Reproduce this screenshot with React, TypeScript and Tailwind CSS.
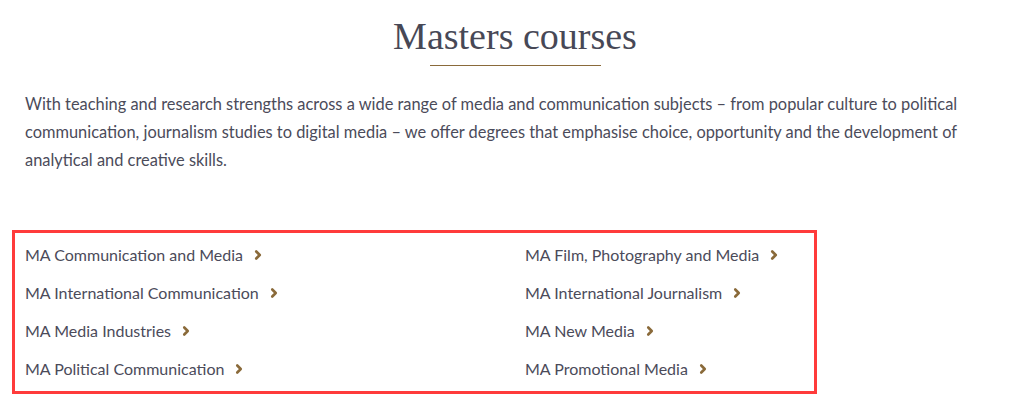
import { ChevronRight } from "lucide-react";

const left = [
  "MA Communication and Media",
  "MA International Communication",
  "MA Media Industries",
  "MA Political Communication",
];

const right = [
  "MA Film, Photography and Media",
  "MA International Journalism",
  "MA New Media",
  "MA Promotional Media",
];

function CourseLink({ label }: { label: string }) {
  return (
    <a href="#" className="flex h-[38px] items-center gap-[8px] text-[16px] text-[#4b4b5a]">
      {label}
      <ChevronRight size={14} strokeWidth={4.5} className="text-[#8a6a3a]" />
    </a>
  );
}

export default function App() {
  return (
    <div className="min-h-[409px] bg-white font-['Lato',sans-serif]">
      <div className="flex flex-col items-center pl-[20px] pt-[14px]">
        <h2 className="font-['Liberation_Serif',serif] text-[38px] leading-[44px] text-[#474856]">
          Masters courses
        </h2>
        <div className="mt-[7px] h-px w-[171px] bg-[#8a6a3a]" />
      </div>

      <p className="mt-[24px] w-[985px] pl-[25px] text-[16.4px] leading-[28px] text-[#4b4b5a]">
        With teaching and research strengths across a wide range of media and communication subjects – from popular
        culture to political communication, journalism studies to digital media – we offer degrees that emphasise choice,
        opportunity and the development of analytical and creative skills.
      </p>

      <div className="ml-[12px] mt-[56px] flex w-[805px] border-[3px] border-[#ff3b3b] py-[3px] pl-[10px]">
        <div className="flex w-[500px] flex-col">
          {left.map((c) => (
            <CourseLink key={c} label={c} />
          ))}
        </div>
        <div className="flex flex-col">
          {right.map((c) => (
            <CourseLink key={c} label={c} />
          ))}
        </div>
      </div>
    </div>
  );
}
